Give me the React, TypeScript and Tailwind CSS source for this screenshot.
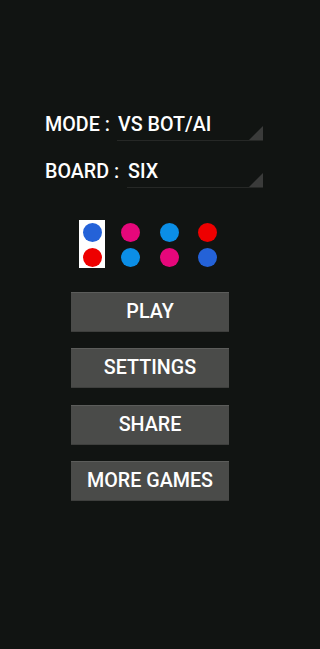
import React from "react";

const font = { fontFamily: "Roboto, sans-serif" };

function Tri() {
  return (
    <svg width="14" height="14" viewBox="0 0 14 14" className="shrink-0">
      <polygon points="14,0 14,14 0,14" fill="#3a3b3a" />
    </svg>
  );
}

function SelectRow({ label, value, labelW, mt }: { label: string; value: string; labelW: string; mt: string }) {
  return (
    <div className={`flex items-end ml-[45px] w-[218px] ${mt}`}>
      <span className={`${labelW} shrink-0 text-[19.7px] leading-[22px] font-medium text-white whitespace-pre pb-[5px]`}>
        {label}
      </span>
      <div className="flex-1 flex items-end border-b border-[#262826]">
        <span className="flex-1 text-[19.7px] leading-[22px] font-medium text-white pb-[4px] pl-[1px]">{value}</span>
        <Tri />
      </div>
    </div>
  );
}

function Dot({ c }: { c: string }) {
  return <div className={`w-[19px] h-[19px] rounded-full ${c}`} />;
}

function Group({ top, bottom, selected }: { top: string; bottom: string; selected?: boolean }) {
  return (
    <div className={`w-[26px] h-[48px] flex flex-col items-center pt-[3px] gap-[6px] ${selected ? "bg-white" : ""}`}>
      <Dot c={top} />
      <Dot c={bottom} />
    </div>
  );
}

function Btn({ children }: { children: React.ReactNode }) {
  return (
    <div className="w-[158px] h-[40px] flex items-center justify-center bg-[#4a4b49] border-t border-[#5c5d5b] border-b border-b-[#3e3f3d] text-white text-[19.7px] font-medium leading-[22px]">
      {children}
    </div>
  );
}

export default function App() {
  return (
    <div className="w-full min-h-screen bg-[#111412] overflow-hidden" style={font}>
      <div className="w-[300px] flex flex-col pt-[114px]">
        <SelectRow label="MODE :" value="VS BOT/AI" labelW="w-[72px]" mt="mt-0" />
        <SelectRow label="BOARD :" value="SIX" labelW="w-[82px]" mt="mt-[20px]" />
        <div className="flex justify-center gap-[12.67px] mt-[32px]">
          <Group top="bg-[#2462d8]" bottom="bg-[#ee0000]" selected />
          <Group top="bg-[#e6077b]" bottom="bg-[#0b8ee6]" />
          <Group top="bg-[#0b8ee6]" bottom="bg-[#e6077b]" />
          <Group top="bg-[#ee0000]" bottom="bg-[#2462d8]" />
        </div>
        <div className="flex flex-col items-center gap-[16.33px] mt-[24px]">
          <Btn>PLAY</Btn>
          <Btn>SETTINGS</Btn>
          <Btn>SHARE</Btn>
          <Btn>MORE GAMES</Btn>
        </div>
      </div>
    </div>
  );
}
